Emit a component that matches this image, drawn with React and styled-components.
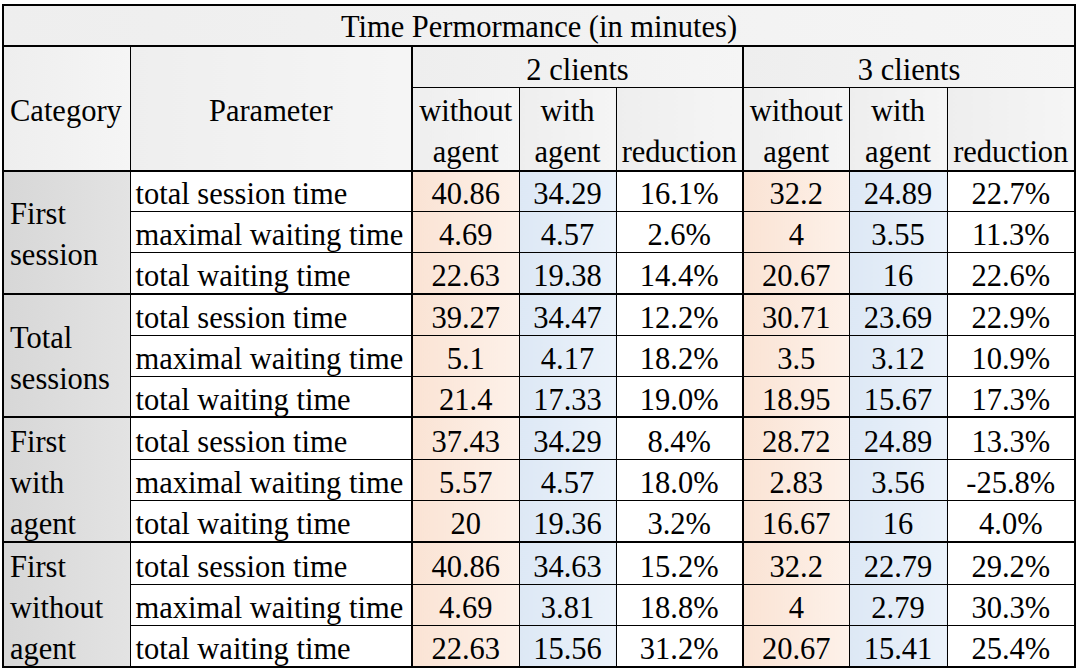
import styled, { createGlobalStyle } from 'styled-components';

const GlobalStyle = createGlobalStyle`
  html, body {
    margin: 0;
    padding: 0;
    background: #ffffff;
  }
`;

const Page = styled.div`
  padding: 4px 0 0 2px;
`;

const Table = styled.table`
  border-collapse: collapse;
  table-layout: fixed;
  width: 1072px;
  border: 2px solid #000;
  font-family: 'Liberation Serif', 'Times New Roman', serif;
  font-size: 30.5px;
  line-height: 34px;
  color: #000;
`;

const Row = styled.tr`
  height: ${(props) => props.$h || 41.17}px;
  border-top: ${(props) => (props.$thick ? '2px' : '1px')} solid #000;
`;

const bgs = {
  head: 'linear-gradient(90deg, #eeeeee, #f5f5f5)',
  cat: 'linear-gradient(90deg, #d7d7d7, #e3e3e3)',
  without: 'linear-gradient(90deg, #fae3d4, #fdf1e9)',
  with: 'linear-gradient(90deg, #dde8f5, #ebf2fa)',
  plain: '#ffffff',
};

const Cell = styled.td`
  padding: 0 ${(props) => (props.$pad != null ? props.$pad : 5)}px;
  border: 1px solid #000;
  border-left-width: ${(props) => (props.$thickLeft ? 2 : 1)}px;
  background: ${(props) => bgs[props.$bg || 'plain']};
  text-align: ${(props) => props.$align || 'center'};
  vertical-align: ${(props) => props.$valign || 'middle'};
  line-height: ${(props) => (props.$multi ? '41px' : 'inherit')};
  white-space: nowrap;
  overflow: hidden;
`;

// nudges the glyphs down a little so they sit low in the cell like the original
const Text = styled.span`
  display: inline-block;
  transform: translateY(${(props) => (props.$dy != null ? props.$dy : 3)}px);
`;

const groups = [
  {
    name: ['First', 'session'],
    rows: [
      ['total session time', '40.86', '34.29', '16.1%', '32.2', '24.89', '22.7%'],
      ['maximal waiting time', '4.69', '4.57', '2.6%', '4', '3.55', '11.3%'],
      ['total waiting time', '22.63', '19.38', '14.4%', '20.67', '16', '22.6%'],
    ],
  },
  {
    name: ['Total', 'sessions'],
    rows: [
      ['total session time', '39.27', '34.47', '12.2%', '30.71', '23.69', '22.9%'],
      ['maximal waiting time', '5.1', '4.17', '18.2%', '3.5', '3.12', '10.9%'],
      ['total waiting time', '21.4', '17.33', '19.0%', '18.95', '15.67', '17.3%'],
    ],
  },
  {
    name: ['First', 'with', 'agent'],
    rows: [
      ['total session time', '37.43', '34.29', '8.4%', '28.72', '24.89', '13.3%'],
      ['maximal waiting time', '5.57', '4.57', '18.0%', '2.83', '3.56', '-25.8%'],
      ['total waiting time', '20', '19.36', '3.2%', '16.67', '16', '4.0%'],
    ],
  },
  {
    name: ['First', 'without', 'agent'],
    rows: [
      ['total session time', '40.86', '34.63', '15.2%', '32.2', '22.79', '29.2%'],
      ['maximal waiting time', '4.69', '3.81', '18.8%', '4', '2.79', '30.3%'],
      ['total waiting time', '22.63', '15.56', '31.2%', '20.67', '15.41', '25.4%'],
    ],
  },
];

const colWidths = [127, 282, 107, 97, 127, 106, 98, 128];
const valueBgs = ['without', 'with', 'plain', 'without', 'with', 'plain'];

const Lines = ({ items }) =>
  items.map((t, i) => (
    <span key={i}>
      {i > 0 && <br />}
      {t}
    </span>
  ));

export default function App() {
  return (
    <Page>
      <GlobalStyle />
      <Table>
        <colgroup>
          {colWidths.map((w, i) => (
            <col key={i} style={{ width: w }} />
          ))}
        </colgroup>
        <tbody>
          <Row $h={41}>
            <Cell colSpan={8} $bg="head">
              <Text $dy={1}>Time Permormance (in minutes)</Text>
            </Cell>
          </Row>
          <Row $h={41} $thick>
            <Cell rowSpan={2} $bg="head" $pad={6} $align="left">
              <Text>Category</Text>
            </Cell>
            <Cell rowSpan={2} $bg="head">
              <Text>Parameter</Text>
            </Cell>
            <Cell colSpan={3} $bg="head" $thickLeft>
              <Text>2 clients</Text>
            </Cell>
            <Cell colSpan={3} $bg="head" $thickLeft>
              <Text>3 clients</Text>
            </Cell>
          </Row>
          <Row $h={81}>
            <Cell $bg="head" $pad={0} $multi $thickLeft>
              <Text>
                <Lines items={['without', 'agent']} />
              </Text>
            </Cell>
            <Cell $bg="head" $pad={0} $multi>
              <Text>
                <Lines items={['with', 'agent']} />
              </Text>
            </Cell>
            <Cell $bg="head" $pad={0} $multi $valign="bottom">
              <Text>reduction</Text>
            </Cell>
            <Cell $bg="head" $pad={0} $multi $thickLeft>
              <Text>
                <Lines items={['without', 'agent']} />
              </Text>
            </Cell>
            <Cell $bg="head" $pad={0} $multi>
              <Text>
                <Lines items={['with', 'agent']} />
              </Text>
            </Cell>
            <Cell $bg="head" $pad={0} $multi $valign="bottom">
              <Text>reduction</Text>
            </Cell>
          </Row>
          {groups.map((g, gi) =>
            g.rows.map((r, ri) => (
              <Row key={`${gi}-${ri}`} $thick={ri === 0}>
                {ri === 0 && (
                  <Cell rowSpan={3} $bg="cat" $align="left" $pad={6} $multi>
                    <Text $dy={g.name.length > 2 ? 4 : 3}>
                      <Lines items={g.name} />
                    </Text>
                  </Cell>
                )}
                <Cell $align="left">
                  <Text>{r[0]}</Text>
                </Cell>
                {r.slice(1).map((v, vi) => (
                  <Cell key={vi} $bg={valueBgs[vi]} $pad={0} $thickLeft={vi === 0 || vi === 3}>
                    <Text>{v}</Text>
                  </Cell>
                ))}
              </Row>
            ))
          )}
        </tbody>
      </Table>
    </Page>
  );
}
